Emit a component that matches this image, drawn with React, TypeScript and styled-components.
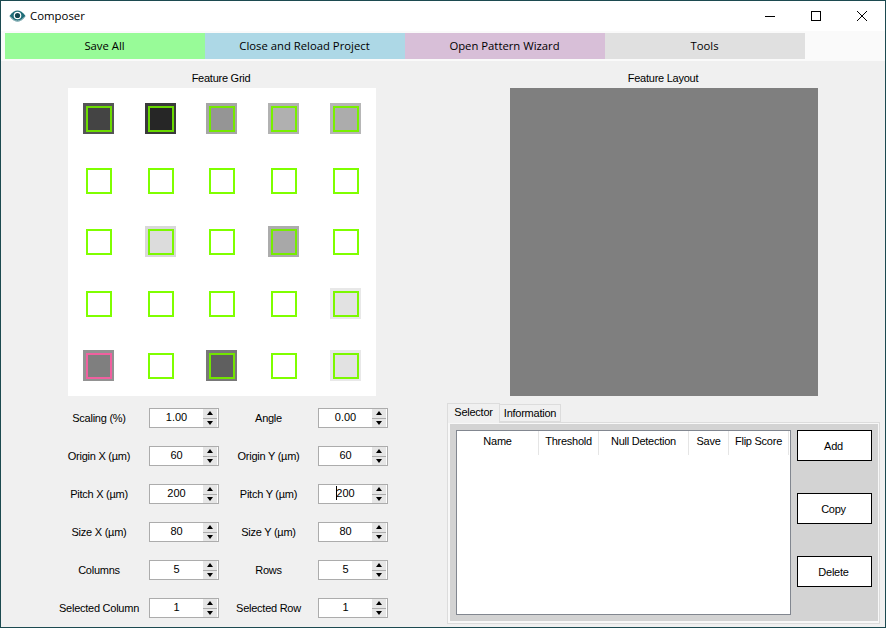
import styled, { createGlobalStyle } from "styled-components";

const GlobalStyle = createGlobalStyle`
  html, body {
    margin: 0;
    padding: 0;
    background: #f0f0f0;
  }
  *, *::before, *::after {
    box-sizing: border-box;
  }
`;

type CellData = { fill?: string; band?: string; ring?: string };

const e: CellData = {};

const CELLS: CellData[] = [
  { fill: "#444444", band: "#555555", ring: "#6cdc00" },
  { fill: "#262626", band: "#3a3a3a", ring: "#68d800" },
  { fill: "#959595", band: "#a6a6a6", ring: "#74e800" },
  { fill: "#b0b0b0", band: "#b2b2b2", ring: "#78f000" },
  { fill: "#acacac", band: "#b6b6b6", ring: "#78f000" },
  e, e, e, e, e,
  e,
  { fill: "#dcdcdc", band: "#d8d8d8", ring: "#7cf800" },
  e,
  { fill: "#a8a8a8", band: "#acacac", ring: "#76ec00" },
  e,
  e, e, e, e,
  { fill: "#e2e2e2", band: "#e8e8e8", ring: "#7cf800" },
  { fill: "#7f7f7f", band: "#929292", ring: "#f0609f" },
  e,
  { fill: "#5f5f5f", band: "#787878", ring: "#72e400" },
  e,
  { fill: "#e2e2e2", band: "#e8e8e8", ring: "#7cf800" },
];

const FIELDS = [
  ["Scaling (%)", "1.00", "Angle", "0.00"],
  ["Origin X (µm)", "60", "Origin Y (µm)", "60"],
  ["Pitch X (µm)", "200", "Pitch Y (µm)", "200"],
  ["Size X (µm)", "80", "Size Y (µm)", "80"],
  ["Columns", "5", "Rows", "5"],
  ["Selected Column", "1", "Selected Row", "1"],
];

const COLUMNS = [
  { name: "Name", width: 82 },
  { name: "Threshold", width: 60 },
  { name: "Null Detection", width: 90 },
  { name: "Save", width: 40 },
  { name: "Flip Score", width: 60 },
];

const TOOLBAR = [
  { label: "Save All", color: "#98fb98" },
  { label: "Close and Reload Project", color: "#add8e6" },
  { label: "Open Pattern Wizard", color: "#d8bfd8" },
  { label: "Tools", color: "#e0e0e0" },
];

const Window = styled.div`
  width: 886px;
  height: 628px;
  display: flex;
  flex-direction: column;
  overflow: hidden;
  background: #f0f0f0;
  border: 1px solid #1c4a50;
  font-family: "Liberation Sans", Arial, sans-serif;
  font-size: 11px;
  letter-spacing: -0.25px;
  color: #000;
`;

const TitleBar = styled.div`
  height: 30px;
  flex: none;
  display: flex;
  align-items: center;
  background: #fff;
  padding-left: 8px;
`;

const AppTitle = styled.span`
  margin-left: 4px;
  padding-bottom: 2px;
  font-family: "Open Sans", sans-serif;
  font-size: 11.4px;
  letter-spacing: 0;
  flex: 1;
`;

const WinButton = styled.div`
  width: 46px;
  height: 30px;
  display: flex;
  align-items: center;
  justify-content: center;
`;

const Toolbar = styled.div`
  height: 30px;
  flex: none;
  display: flex;
  padding: 2px 4px;
  background: #fafafa;
`;

const ToolButton = styled.div<{ $color: string }>`
  width: 200px;
  height: 26px;
  padding: 0 1px 2px 0;
  display: flex;
  align-items: center;
  justify-content: center;
  background: ${(p) => p.$color};
  font-family: "Open Sans", sans-serif;
  font-size: 11.3px;
  letter-spacing: 0;
`;

const Body = styled.div`
  flex: 1;
  display: grid;
  grid-template-columns: 445px 1fr;
`;

const LeftColumn = styled.div`
  padding: 10px 0 0 48px;
`;

const Heading = styled.div`
  width: 308px;
  height: 17px;
  padding-right: 2px;
  line-height: 15px;
  text-align: center;
`;

const GridHeading = styled(Heading)`
  margin-left: 19px;
`;

const GridPanel = styled.div`
  width: 308px;
  height: 308px;
  margin-left: 19px;
  background: #fff;
  display: grid;
  grid-template-columns: repeat(5, 1fr);
  grid-template-rows: repeat(5, 1fr);
  align-items: center;
  justify-items: center;
`;

const Cell = styled.div<{ $fill?: string; $band?: string; $ring?: string }>`
  width: 31px;
  height: 31px;
  padding: 3px 2px 2px 3px;
  background: ${(p) => p.$band ?? "#fff"};

  &::after {
    content: "";
    display: block;
    width: 26px;
    height: 26px;
    background: ${(p) => p.$fill ?? "#fff"};
    border: 2px solid ${(p) => p.$ring ?? "#7fff00"};
  }
`;

const Form = styled.div`
  margin-top: 12px;
  display: grid;
  grid-template-columns: 100px 70px 99px 70px;
  grid-auto-rows: 20px;
  row-gap: 18px;
  align-items: center;
`;

const FieldLabel = styled.div`
  text-align: center;
  white-space: nowrap;
  padding-bottom: 1px;
`;

const Spinner = styled.div`
  height: 20px;
  display: flex;
  align-items: center;
  background: #fff;
  border: 1px solid #acacac;
`;

const SpinValue = styled.div`
  flex: 1;
  text-align: center;
  line-height: 16px;
  padding-bottom: 2px;
  letter-spacing: 0;
`;

const Caret = styled.span`
  display: inline-block;
  width: 1px;
  height: 14px;
  margin-right: -1px;
  background: #000;
  vertical-align: -3px;
`;

const SpinButtons = styled.div`
  width: 14px;
  height: 18px;
  margin-right: 1px;
  display: flex;
  flex-direction: column;
  gap: 1px;
  background: #acacac;
`;

const SpinArrow = styled.div<{ $down?: boolean }>`
  flex: 1;
  background: #e6e6e6;
  display: flex;
  align-items: center;
  justify-content: center;

  &::after {
    content: "";
    border-left: 3.5px solid transparent;
    border-right: 3.5px solid transparent;
    ${(p) => (p.$down ? "border-top: 4px solid #000;" : "border-bottom: 4px solid #000;")}
  }
`;

const RightColumn = styled.div`
  padding: 10px 0 0 1px;
`;

const LayoutHeading = styled(Heading)`
  margin-left: 63px;
`;

const LayoutPanel = styled.div`
  width: 308px;
  height: 308px;
  margin-left: 63px;
  background: #7f7f7f;
`;

const Tabs = styled.div`
  margin-top: 7px;
  height: 19px;
  display: flex;
  align-items: flex-end;
`;

const Tab = styled.div<{ $active?: boolean }>`
  height: ${(p) => (p.$active ? 20 : 18)}px;
  width: ${(p) => (p.$active ? 53 : 61)}px;
  margin-bottom: ${(p) => (p.$active ? -1 : 0)}px;
  position: relative;
  text-align: center;
  line-height: ${(p) => (p.$active ? 16 : 17)}px;
  background: #f0f0f0;
  border: 1px solid #dcdcdc;
  border-bottom: ${(p) => (p.$active ? "none" : "1px solid #dcdcdc")};
  border-left: ${(p) => (p.$active ? "1px solid #dcdcdc" : "none")};
`;

const TabPage = styled.div`
  width: 433px;
  height: 202px;
  border: 1px solid #dcdcdc;
  padding: 1px 1px 2px 2px;
  background: #f8f8f8;
`;

const TabInner = styled.div`
  height: 100%;
  display: flex;
  background: #d3d3d3;
  padding: 6px;
  gap: 6px;
`;

const ListView = styled.div`
  width: 335px;
  height: 185px;
  flex: none;
  background: #fff;
  border: 1px solid #828790;
`;

const ListHeader = styled.div`
  display: flex;
  height: 24px;
`;

const ListColumn = styled.div<{ $width: number }>`
  width: ${(p) => p.$width}px;
  text-align: center;
  line-height: 20px;
  border-right: 1px solid #e5e5e5;
  white-space: nowrap;
`;

const ActionColumn = styled.div`
  display: flex;
  flex-direction: column;
  gap: 32px;
`;

const ActionButton = styled.div`
  width: 75px;
  height: 31px;
  padding: 0 2px 0 0;
  display: flex;
  align-items: center;
  justify-content: center;
  background: #fff;
  border: 1px solid #000;
`;

function EyeIcon() {
  return (
    <svg width="17" height="12" viewBox="0 0 17 12">
      <path d="M0.5 6C3 2 6 0.5 8.5 0.5S14 2 16.5 6C14 10 11 11.5 8.5 11.5S3 10 0.5 6Z" fill="#1f6d78" />
      <path d="M1 6.4C3.5 9.6 6 11 8.5 11S13.5 9.6 16 6.4" stroke="#a9c6ca" fill="none" />
      <circle cx="8.5" cy="5.5" r="3.8" fill="#fff" />
      <circle cx="8.5" cy="5.5" r="2.6" fill="#12464f" />
    </svg>
  );
}

function Field({ label, value, caret }: { label: string; value: string; caret?: boolean }) {
  return (
    <>
      <FieldLabel>{label}</FieldLabel>
      <Spinner>
        <SpinValue>
          {caret && <Caret />}
          {value}
        </SpinValue>
        <SpinButtons>
          <SpinArrow />
          <SpinArrow $down />
        </SpinButtons>
      </Spinner>
    </>
  );
}

function FieldRow({ row }: { row: string[] }) {
  return (
    <>
      <Field label={row[0]} value={row[1]} />
      <Field label={row[2]} value={row[3]} caret={row[2] === "Pitch Y (µm)"} />
    </>
  );
}

export default function App() {
  return (
    <Window>
      <GlobalStyle />

      <TitleBar>
        <EyeIcon />
        <AppTitle>Composer</AppTitle>
        <WinButton>
          <svg width="10" height="10" viewBox="0 0 10 10">
            <path d="M0 5.5H10" stroke="#000" />
          </svg>
        </WinButton>
        <WinButton>
          <svg width="10" height="10" viewBox="0 0 10 10">
            <rect x="0.5" y="0.5" width="9" height="9" fill="none" stroke="#000" />
          </svg>
        </WinButton>
        <WinButton>
          <svg width="10" height="10" viewBox="0 0 10 10">
            <path d="M0 0L10 10M10 0L0 10" stroke="#000" strokeWidth="1" />
          </svg>
        </WinButton>
      </TitleBar>

      <Toolbar>
        {TOOLBAR.map((item) => (
          <ToolButton key={item.label} $color={item.color}>
            {item.label}
          </ToolButton>
        ))}
      </Toolbar>

      <Body>
        <LeftColumn>
          <GridHeading>Feature Grid</GridHeading>
          <GridPanel>
            {CELLS.map((c, i) => (
              <Cell key={i} $fill={c.fill} $band={c.band} $ring={c.ring} />
            ))}
          </GridPanel>

          <Form>
            {FIELDS.map((row) => (
              <FieldRow key={row[0]} row={row} />
            ))}
          </Form>
        </LeftColumn>

        <RightColumn>
          <LayoutHeading>Feature Layout</LayoutHeading>
          <LayoutPanel />

          <Tabs>
            <Tab $active>Selector</Tab>
            <Tab>Information</Tab>
          </Tabs>
          <TabPage>
            <TabInner>
              <ListView>
                <ListHeader>
                  {COLUMNS.map((col) => (
                    <ListColumn key={col.name} $width={col.width}>
                      {col.name}
                    </ListColumn>
                  ))}
                </ListHeader>
              </ListView>
              <ActionColumn>
                <ActionButton>Add</ActionButton>
                <ActionButton>Copy</ActionButton>
                <ActionButton>Delete</ActionButton>
              </ActionColumn>
            </TabInner>
          </TabPage>
        </RightColumn>
      </Body>
    </Window>
  );
}
